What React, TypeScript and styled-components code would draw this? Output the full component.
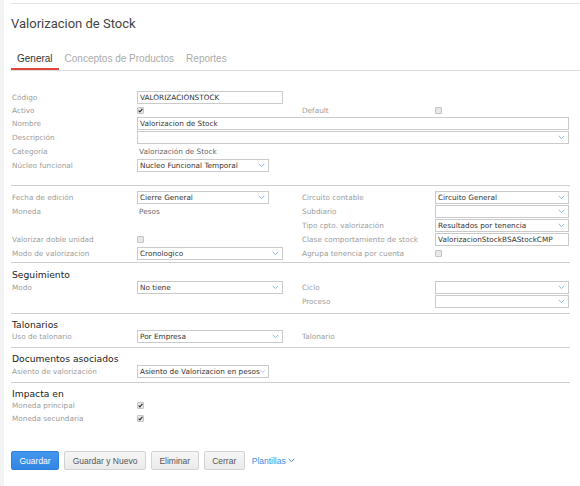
import React from 'react';
import styled, { createGlobalStyle } from 'styled-components';

const GlobalStyle = createGlobalStyle`
  html, body {
    margin: 0;
    padding: 0;
    background: #fff;
  }
  body {
    font-family: "DejaVu Sans", Verdana, sans-serif;
  }
`;

const Shell = styled.div`
  display: flex;
  min-height: 486px;
`;

const SideStrip = styled.div`
  width: 4px;
  flex-shrink: 0;
  background: #f3f3f3;
`;

const Main = styled.div`
  flex: 1;
  padding-left: 7px;
`;

const TopBar = styled.div`
  height: 3px;
  border-bottom: 1px solid #e3e3e3;
`;

const Title = styled.h1`
  margin: 0;
  padding-top: 12px;
  font-family: Roboto, "Liberation Sans", sans-serif;
  font-weight: 400;
  font-size: 13px;
  line-height: 16px;
  color: #444;
`;

const TabBar = styled.div`
  display: flex;
  margin-top: 20px;
  border-bottom: 1px solid #ddd;
`;

const Tab = styled.div<{ $active?: boolean }>`
  padding: 0 6px 2px;
  font-family: "Liberation Sans", Arial, sans-serif;
  font-size: 10px;
  line-height: 14px;
  color: ${p => (p.$active ? '#333' : '#aaa')};
  border-bottom: 2px solid ${p => (p.$active ? '#e2463a' : 'transparent')};
`;

const Form = styled.div`
  width: 559px;
`;

const Section = styled.div<{ $top?: number; $bottom?: number; $divider?: boolean }>`
  padding-top: ${p => p.$top ?? 5}px;
  padding-bottom: ${p => p.$bottom ?? 4}px;
  border-top: ${p => (p.$divider ? '1px solid #cfcfcf' : 'none')};
`;

const Heading = styled.div`
  padding-left: 1px;
  font-size: 9.2px;
  line-height: 11px;
  color: #222;
`;

const Row = styled.div<{ $h?: number }>`
  display: grid;
  grid-template-columns: 126px 164px 134px 134px;
  align-items: center;
  height: ${p => p.$h ?? 14}px;
`;

const Label = styled.span`
  padding-left: 1px;
  font-size: 7.3px;
  color: #9c9c9c;
  white-space: nowrap;
`;

const Cell = styled.div<{ $span?: number }>`
  grid-column: span ${p => p.$span ?? 1};
  display: flex;
  align-items: center;
  min-width: 0;
`;

const Field = styled.div<{ $w?: number }>`
  box-sizing: border-box;
  width: ${p => (p.$w ? `${p.$w}px` : '100%')};
  height: 13px;
  padding: 0 3px 0 2px;
  display: flex;
  align-items: center;
  justify-content: space-between;
  border: 1px solid #cacaca;
  background: #fff;
  font-size: 7.3px;
  color: #333;
  white-space: nowrap;
  overflow: hidden;
`;

const Value = styled.span`
  padding-left: 2px;
  font-size: 7.3px;
  color: #666;
`;

const Box = styled.span`
  box-sizing: border-box;
  width: 7px;
  height: 7px;
  border: 1px solid #c4c4c4;
  border-radius: 1px;
  background: #e8e8e8;
  display: flex;
  align-items: center;
  justify-content: center;
`;

const Footer = styled.div`
  display: flex;
  align-items: center;
  gap: 5px;
  padding-top: 26px;
`;

const Button = styled.button<{ $primary?: boolean }>`
  height: 19px;
  padding: 0 7.5px;
  border-radius: 2px;
  font-family: "Liberation Sans", Arial, sans-serif;
  font-size: 8.5px;
  cursor: pointer;
  border: 1px solid ${p => (p.$primary ? '#2f7fdc' : '#d2d2d2')};
  background: ${p =>
    p.$primary ? 'linear-gradient(#4596ee, #3385e4)' : 'linear-gradient(#f6f6f6, #ebebeb)'};
  color: ${p => (p.$primary ? '#fff' : '#555')};
`;

const LinkButton = styled.span`
  display: flex;
  align-items: center;
  gap: 2px;
  margin-left: 2px;
  font-family: "Liberation Sans", Arial, sans-serif;
  font-size: 8.5px;
  color: #3b8de8;
`;

const Chevron = ({ color = '#8db5e8' }: { color?: string }) => (
  <svg width="7" height="5" viewBox="0 0 7 5">
    <polyline points="0.7,0.8 3.5,3.6 6.3,0.8" fill="none" stroke={color} strokeWidth="1" />
  </svg>
);

const Check = ({ checked }: { checked?: boolean }) => (
  <Box>
    {checked && (
      <svg width="5" height="5" viewBox="0 0 5 5">
        <polyline points="0.6,2.6 1.9,3.9 4.4,0.8" fill="none" stroke="#333" strokeWidth="1.2" />
      </svg>
    )}
  </Box>
);

const Select = ({ value = '', w }: { value?: string; w?: number }) => (
  <Field $w={w}>
    <span>{value}</span>
    <Chevron />
  </Field>
);

export default function App() {
  return (
    <>
      <GlobalStyle />
      <Shell>
        <SideStrip />
        <Main>
          <TopBar />
          <Title>Valorizacion de Stock</Title>
          <TabBar>
            <Tab $active>General</Tab>
            <Tab>Conceptos de Productos</Tab>
            <Tab>Reportes</Tab>
          </TabBar>

          <Form>
            <Section $top={19} $bottom={13}>
              <Row>
                <Label>Código</Label>
                <Cell><Field $w={146}>VALORIZACIONSTOCK</Field></Cell>
              </Row>
              <Row $h={13}>
                <Label>Activo</Label>
                <Cell><Check checked /></Cell>
                <Label>Default</Label>
                <Cell><Check /></Cell>
              </Row>
              <Row $h={13}>
                <Label>Nombre</Label>
                <Cell $span={3}><Field>Valorizacion de Stock</Field></Cell>
              </Row>
              <Row>
                <Label>Descripción</Label>
                <Cell $span={3}><Select /></Cell>
              </Row>
              <Row>
                <Label>Categoría</Label>
                <Cell><Value>Valorización de Stock</Value></Cell>
              </Row>
              <Row>
                <Label>Núcleo funcional</Label>
                <Cell><Select w={132} value="Nucleo Funcional Temporal" /></Cell>
              </Row>
            </Section>

            <Section $divider $top={4} $bottom={2}>
              <Row>
                <Label>Fecha de edición</Label>
                <Cell><Select w={132} value="Cierre General" /></Cell>
                <Label>Circuito contable</Label>
                <Cell><Select value="Circuito General" /></Cell>
              </Row>
              <Row>
                <Label>Moneda</Label>
                <Cell><Value>Pesos</Value></Cell>
                <Label>Subdiario</Label>
                <Cell><Select /></Cell>
              </Row>
              <Row>
                <Label />
                <Cell />
                <Label>Tipo cpto. valorización</Label>
                <Cell><Select value="Resultados por tenencia" /></Cell>
              </Row>
              <Row>
                <Label>Valorizar doble unidad</Label>
                <Cell><Check /></Cell>
                <Label>Clase comportamiento de stock</Label>
                <Cell><Field>ValorizacionStockBSAStockCMP</Field></Cell>
              </Row>
              <Row>
                <Label>Modo de valorizacion</Label>
                <Cell><Select w={146} value="Cronologico" /></Cell>
                <Label>Agrupa tenencia por cuenta</Label>
                <Cell><Check /></Cell>
              </Row>
            </Section>

            <Section $divider $top={6} $bottom={5}>
              <Heading>Seguimiento</Heading>
              <Row>
                <Label>Modo</Label>
                <Cell><Select w={146} value="No tiene" /></Cell>
                <Label>Ciclo</Label>
                <Cell><Select /></Cell>
              </Row>
              <Row>
                <Label />
                <Cell />
                <Label>Proceso</Label>
                <Cell><Select /></Cell>
              </Row>
            </Section>

            <Section $divider>
              <Heading>Talonarios</Heading>
              <Row $h={13}>
                <Label>Uso de talonario</Label>
                <Cell><Select w={146} value="Por Empresa" /></Cell>
                <Label>Talonario</Label>
                <Cell />
              </Row>
            </Section>

            <Section $divider>
              <Heading>Documentos asociados</Heading>
              <Row>
                <Label>Asiento de valorización</Label>
                <Cell><Select w={132} value="Asiento de Valorizacion en pesos" /></Cell>
              </Row>
            </Section>

            <Section $divider $bottom={0}>
              <Heading>Impacta en</Heading>
              <Row $h={13}>
                <Label>Moneda principal</Label>
                <Cell><Check checked /></Cell>
              </Row>
              <Row $h={13}>
                <Label>Moneda secundaria</Label>
                <Cell><Check checked /></Cell>
              </Row>
            </Section>
          </Form>

          <Footer>
            <Button $primary>Guardar</Button>
            <Button>Guardar y Nuevo</Button>
            <Button>Eliminar</Button>
            <Button>Cerrar</Button>
            <LinkButton>
              Plantillas
              <Chevron color="#3b8de8" />
            </LinkButton>
          </Footer>
        </Main>
      </Shell>
    </>
  );
}
